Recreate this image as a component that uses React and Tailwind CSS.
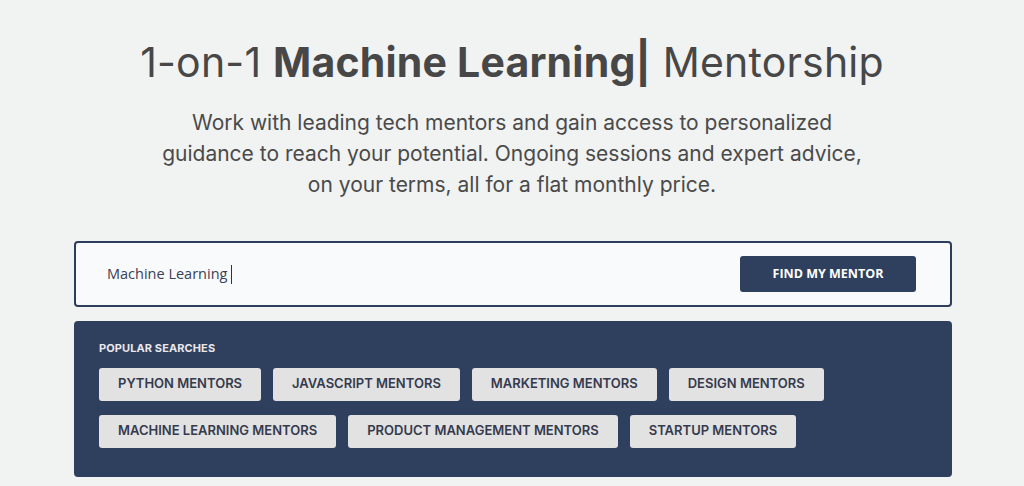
import React from 'react';

const popular = [
  ['Python Mentors', 'JavaScript Mentors', 'Marketing Mentors', 'Design Mentors'],
  ['Machine Learning Mentors', 'Product Management Mentors', 'Startup Mentors'],
];

export default function App() {
  return (
    <div className="min-h-screen bg-[#f1f2f2] pt-[32px] font-['Inter',sans-serif]">
      <h1 className="text-center text-[41px] leading-[60px] text-[#474747] tracking-[0.2px]">
        1-on-1 <span className="font-bold">Machine Learning</span>
        <span className="font-bold">|</span> Mentorship
      </h1>
      <p className="mx-auto mt-[15px] w-[720px] text-center text-[21px] leading-[31px] text-[#4a4a4a]">
        Work with leading tech mentors and gain access to personalized guidance to reach your potential. Ongoing sessions and expert advice, on your terms, all for a flat monthly price.
      </p>

      <div className="ml-[74px] mt-[41px] w-[878px]">
        <div className="flex h-[66px] items-center justify-between rounded-[4px] border-2 border-[#2e3d5c] bg-[#f8fafb] pl-[31px] pr-[34px]">
          <div className="flex items-center font-['Open_Sans',sans-serif] text-[14.5px] text-[#3b4054]">
            Machine Learning
            <span className="ml-[4px] inline-block h-[19px] w-px bg-[#333]" />
          </div>
          <button className="h-[36px] w-[176px] rounded-[3px] bg-[#2f3f5e] font-['Open_Sans',sans-serif] text-[12.5px] font-bold text-white">
            FIND MY MENTOR
          </button>
        </div>

        <div className="mt-[14px] h-[156px] rounded-[4px] bg-[#2f3f5e] px-[25px] pt-[19px]">
          <div className="text-[11px] font-bold uppercase text-[#e8e8ec] tracking-[0.1px]">Popular Searches</div>
          <div className="mt-[11px] flex flex-col gap-[14px]">
            {popular.map((row, i) => (
              <div key={i} className="flex gap-[12px]">
                {row.map((label) => (
                  <button
                    key={label}
                    className="h-[33px] rounded-[3px] bg-[#e2e2e2] px-[19px] text-[13px] font-semibold uppercase text-[#353a4d]"
                  >
                    {label}
                  </button>
                ))}
              </div>
            ))}
          </div>
        </div>
      </div>
    </div>
  );
}
